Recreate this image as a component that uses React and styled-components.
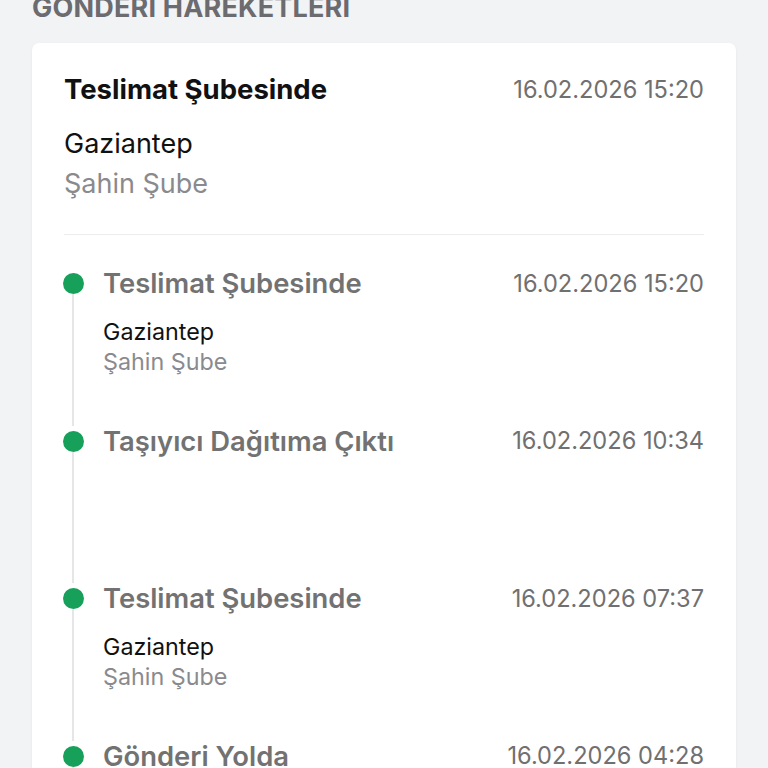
import React from "react";
import styled, { createGlobalStyle } from "styled-components";

const Global = createGlobalStyle`
  html, body { margin: 0; padding: 0; background: #f2f3f5; }
  body { font-family: Inter, "Noto Sans", sans-serif; -webkit-font-smoothing: antialiased; }
`;

const Page = styled.div`
  padding: 0 32px;
  overflow: hidden;
  height: 768px;
  box-sizing: border-box;
`;

const SectionTitle = styled.h2`
  margin: -9px 0 0 0;
  font-size: 27px;
  line-height: 34px;
  font-weight: 700;
  color: #6b6b70;
  letter-spacing: 0.2px;
  text-transform: uppercase;
`;

const Card = styled.div`
  margin-top: 18px;
  background: #fff;
  border-radius: 7px;
  box-shadow: 0 1px 3px rgba(0, 0, 0, 0.06);
  padding: 0 32px;
`;

const Summary = styled.div`
  padding: 31px 0 30px;
  border-bottom: 1px solid #ededed;
`;

const Row = styled.div`
  display: flex;
  justify-content: space-between;
  align-items: center;
  height: 30px;
`;

const MainTitle = styled.div`
  font-size: 27.5px;
  font-weight: 700;
  color: #111;
`;

const DateText = styled.div`
  font-size: 23.6px;
  color: #707070;
  font-weight: 400;
`;

const Place = styled.div`
  font-size: ${(p) => p.$size}px;
  line-height: ${(p) => p.$lh}px;
  color: ${(p) => (p.$muted ? "#8a8a8e" : "#111")};
`;

const Places = styled.div`
  margin-top: ${(p) => p.$gap}px;
  min-height: 60px;
`;

const Timeline = styled.div`
  padding-top: 33px;
`;

const Item = styled.div`
  display: flex;
  gap: 20px;
  height: 157.5px;
`;

const Rail = styled.div`
  width: 20px;
  margin-left: -1px;
  display: flex;
  flex-direction: column;
  align-items: center;
  padding-top: 5px;
`;

const Dot = styled.div`
  width: 21px;
  height: 21px;
  border-radius: 50%;
  background: #16a05a;
  flex: none;
`;

const Line = styled.div`
  width: 2px;
  flex: 1;
  background: #e6e6e8;
`;

const Content = styled.div`
  flex: 1;
`;

const ItemTitle = styled.div`
  font-size: 27.4px;
  font-weight: 600;
  color: #727272;
`;

const events = [
  { title: "Teslimat Şubesinde", date: "16.02.2026 15:20", city: "Gaziantep", branch: "Şahin Şube" },
  { title: "Taşıyıcı Dağıtıma Çıktı", date: "16.02.2026 10:34" },
  { title: "Teslimat Şubesinde", date: "16.02.2026 07:37", city: "Gaziantep", branch: "Şahin Şube" },
  { title: "Gönderi Yolda", date: "16.02.2026 04:28" },
];

export default function App() {
  return (
    <>
      <Global />
      <Page>
        <SectionTitle>Gönderi Hareketleri</SectionTitle>
        <Card>
          <Summary>
            <Row>
              <MainTitle>Teslimat Şubesinde</MainTitle>
              <DateText>16.02.2026 15:20</DateText>
            </Row>
            <Places $gap={20}>
              <Place $size={27} $lh={40}>Gaziantep</Place>
              <Place $size={27} $lh={40} $muted>Şahin Şube</Place>
            </Places>
          </Summary>
          <Timeline>
            {events.map((e, i) => (
              <Item key={i}>
                <Rail>
                  <Dot />
                  <Line />
                </Rail>
                <Content>
                  <Row>
                    <ItemTitle>{e.title}</ItemTitle>
                    <DateText>{e.date}</DateText>
                  </Row>
                  <Places $gap={19}>
                    {e.city && <Place $size={23.3} $lh={30}>{e.city}</Place>}
                    {e.branch && <Place $size={23.3} $lh={30} $muted>{e.branch}</Place>}
                  </Places>
                </Content>
              </Item>
            ))}
          </Timeline>
        </Card>
      </Page>
    </>
  );
}
